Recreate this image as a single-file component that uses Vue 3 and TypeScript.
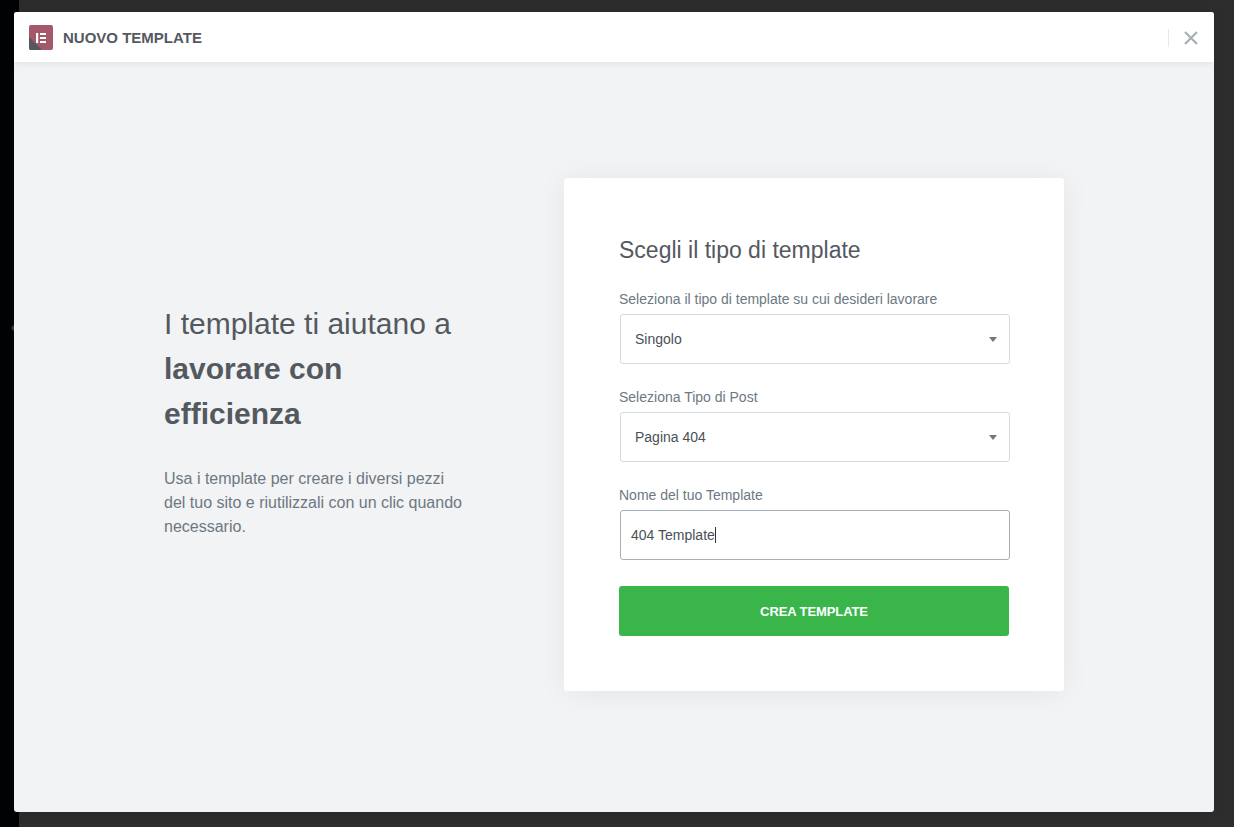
<script setup lang="ts">
const postTypes: string[] = ['Singolo', 'Pagina 404']
</script>

<template>
  <div class="page">
    <div class="modal">
      <header class="header">
        <div class="brand">
          <svg class="logo" width="24" height="25" viewBox="0 0 24 25">
            <rect width="24" height="25" rx="2" fill="#a4596a" />
            <path d="M0 12 L13 25 L2 25 Q0 25 0 23 Z" fill="#54595f" />
            <rect x="7" y="8" width="2.2" height="10" fill="#fff" />
            <rect x="11" y="8" width="6" height="2" fill="#fff" />
            <rect x="11" y="12" width="6" height="2" fill="#fff" />
            <rect x="11" y="16" width="6" height="2" fill="#fff" />
          </svg>
          <span class="brand-title">NUOVO TEMPLATE</span>
        </div>
        <div class="close-wrap">
          <svg class="close" width="14" height="14" viewBox="0 0 14 14">
            <path d="M1 1 L13 13 M13 1 L1 13" stroke="#a4afb7" stroke-width="2.2" fill="none" />
          </svg>
        </div>
      </header>
      <main class="content">
        <section class="intro">
          <h1 class="intro-title">I template ti aiutano a <strong>lavorare con efficienza</strong></h1>
          <p class="intro-text">Usa i template per creare i diversi pezzi del tuo sito e riutilizzali con un clic quando necessario.</p>
        </section>
        <form class="card" @submit.prevent>
          <h2 class="card-title">Scegli il tipo di template</h2>
          <label class="label">Seleziona il tipo di template su cui desideri lavorare</label>
          <div class="select">{{ postTypes[0] }}<span class="caret"></span></div>
          <label class="label">Seleziona Tipo di Post</label>
          <div class="select">{{ postTypes[1] }}<span class="caret"></span></div>
          <label class="label">Nome del tuo Template</label>
          <div class="input"><span>404 Template</span><span class="cursor"></span></div>
          <button class="submit" type="submit">CREA TEMPLATE</button>
        </form>
      </main>
    </div>
  </div>
</template>

<style>
html, body { margin: 0; padding: 0; }
</style>

<style scoped>
.page {
  position: relative;
  width: 1234px;
  height: 827px;
  box-sizing: border-box;
  padding: 12px 20px 15px 14px;
  background: linear-gradient(to right, #000305 19px, #2d2d2d 19px);
  font-family: "Liberation Sans", Arial, sans-serif;
  overflow: hidden;
}
.page::before {
  content: "";
  position: absolute;
  left: 11px;
  top: 324px;
  width: 0;
  height: 0;
  border-top: 4px solid transparent;
  border-bottom: 4px solid transparent;
  border-right: 3px solid #333;
}
.modal {
  height: 800px;
  display: flex;
  flex-direction: column;
  background: #f1f3f5;
  border-radius: 3px;
  overflow: hidden;
  box-shadow: 0 0 15px rgba(0, 0, 0, 0.08);
}
.header {
  height: 50px;
  box-sizing: border-box;
  padding-top: 1px;
  flex: none;
  display: flex;
  align-items: center;
  justify-content: space-between;
  background: #fff;
  box-shadow: 0 0 8px rgba(0, 0, 0, 0.1);
  position: relative;
}
.brand {
  display: flex;
  align-items: center;
  padding-left: 15px;
}
.logo { display: block; }
.brand-title {
  margin-left: 10px;
  font-size: 15px;
  font-weight: 700;
  color: #54595f;
}
.close-wrap {
  display: flex;
  align-items: center;
  height: 18px;
  border-left: 1px solid #e6e9ec;
  margin-right: 16px;
  padding-left: 15px;
}
.close { display: block; }
.content {
  flex: 1;
  display: flex;
  align-items: flex-start;
  padding-left: 150px;
}
.intro {
  width: 300px;
  margin-top: 238.5px;
  flex: none;
}
.intro-title {
  margin: 0;
  width: 290px;
  font-size: 30px;
  line-height: 45.3px;
  font-weight: 400;
  color: #54595f;
}
.intro-title strong { font-weight: 700; }
.intro-text {
  margin: 30.7px 0 0;
  font-size: 16px;
  line-height: 24px;
  color: #6d7882;
}
.card {
  width: 500px;
  height: 513px;
  box-sizing: border-box;
  margin: 116px 0 0 100px;
  padding: 57px 55px 0;
  background: #fff;
  border-radius: 3px;
  box-shadow: 0 2px 30px rgba(0, 0, 0, 0.06);
  flex: none;
}
.card-title {
  margin: 0 0 26px;
  font-size: 23px;
  line-height: 30px;
  font-weight: 400;
  color: #54595f;
}
.label {
  display: block;
  font-size: 14px;
  line-height: 16px;
  color: #6d7882;
  margin-bottom: 7px;
}
.select, .input {
  position: relative;
  box-sizing: border-box;
  width: 390px;
  height: 50px;
  margin-left: 1px;
  margin-bottom: 25px;
  display: flex;
  align-items: center;
  border: 1px solid #d5dadf;
  border-radius: 3px;
  padding-left: 14px;
  font-size: 14px;
  color: #495157;
  background: #fff;
}
.caret {
  position: absolute;
  right: 12px;
  top: 22px;
  width: 0;
  height: 0;
  border-left: 4px solid transparent;
  border-right: 4px solid transparent;
  border-top: 5px solid #6d7882;
}
.input {
  border-color: #a4afb7;
  padding-left: 10px;
  margin-bottom: 26px;
}
.cursor {
  display: inline-block;
  width: 1px;
  height: 16px;
  background: #333;
}
.submit {
  display: block;
  width: 390px;
  height: 50px;
  border: 0;
  border-radius: 3px;
  background: #39b54a;
  color: #fff;
  font-family: inherit;
  font-size: 13px;
  font-weight: 700;
  letter-spacing: -0.1px;
}
</style>
